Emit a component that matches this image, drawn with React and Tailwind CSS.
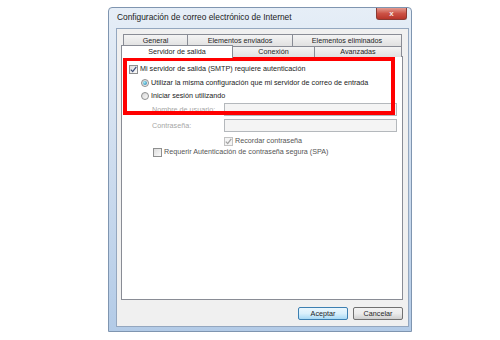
import React from 'react';

const Check = ({ color = '#3d4f7a' }) => (
    <svg width="7" height="7" viewBox="0 0 7 7" className="block">
        <path d="M0.8 3.6 L2.7 5.6 L6.3 0.9" fill="none" stroke={color} strokeWidth="1.3" />
    </svg>
);

const CheckBox = ({ checked, disabled }) => (
    <div className={`w-[9px] h-[9px] shrink-0 border flex items-center justify-center ${disabled ? 'border-[#c2c2c2] bg-[#f4f4f4]' : 'border-[#8e8f8f] bg-gradient-to-br from-[#dcdcdc] to-[#fbfbfb]'}`}>
        {checked && <Check color={disabled ? '#a3a3a3' : '#3d4f7a'} />}
    </div>
);

const Radio = ({ checked }) => (
    <div className="w-[8px] h-[8px] shrink-0 rounded-full border border-[#8e8f8f] bg-gradient-to-br from-[#d6d6d6] to-[#fafafa] flex items-center justify-center">
        {checked && <div className="w-[4px] h-[4px] rounded-full bg-[radial-gradient(circle_at_35%_35%,#9ef0f8,#1d6fa5)]" />}
    </div>
);

const Tab = ({ label, w, first }) => (
    <div
        className={`h-full border border-b-0 border-[#898c95] bg-gradient-to-b from-[#f4f4f4] to-[#e1e1e1] flex items-center justify-center text-[#1e1e1e] ${first ? '' : '-ml-px'}`}
        style={{ width: w }}
    >
        {label}
    </div>
);

export default function App() {
    return (
        <div className="w-[500px] h-[340px] bg-white overflow-hidden pt-[7px] pl-[108px] font-['Liberation_Sans',Arial,sans-serif] text-[7.2px] leading-none">
            {/* window */}
            <div className="w-[304px] h-[325px] flex flex-col border border-[#7f95b0] rounded-t-[4px] bg-gradient-to-b from-[#e6eef7] via-[#cddcee] to-[#b3cbe7]">
                {/* title bar */}
                <div className="h-[20px] shrink-0 flex items-start justify-between">
                    <div className="pl-[8px] pt-[5px] text-[8.4px] text-[#1b1b1b]">Configuración de correo electrónico de Internet</div>
                    <div className="mr-[4px] w-[31px] h-[12px] rounded-b-[3px] border border-t-0 border-[#8a3b34] bg-gradient-to-b from-[#e39a90] via-[#cc5246] to-[#b8352a] flex items-center justify-center">
                        <span className="text-[#f4e6e4] text-[8px] font-bold leading-none">x</span>
                    </div>
                </div>

                {/* content */}
                <div className="ml-[7px] mr-[2px] mb-[4px] flex-1 bg-[#f0f0f0] border border-[#94a7bf] flex flex-col pt-[5px] pl-[4px] pr-[5px] pb-[5px]">
                    {/* tabs */}
                    <div className="h-[12px] flex ml-[2px]">
                        <Tab label="General" w={65} first />
                        <Tab label="Elementos enviados" w={106} />
                        <Tab label="Elementos eliminados" w={110} />
                    </div>
                    <div className="h-[11px] flex -mb-px relative z-10">
                        <div className="w-[112px] h-[13px] -mt-px border border-b-0 border-[#898c95] bg-white flex items-start justify-center pt-[2px] text-[#1e1e1e]">
                            Servidor de salida
                        </div>
                        <Tab label="Conexión" w={83} />
                        <Tab label="Avanzadas" w={88} />
                    </div>

                    {/* panel */}
                    <div className="h-[244px] shrink-0 border border-[#898c95] bg-white relative flex flex-col text-[#222222]">
                        <div className="absolute left-[1px] top-0 w-[272px] h-[58px] border-[4px] border-[#ff0000]" />

                        <div className="h-[12px] mt-[6px] pl-[7px] flex items-center gap-[2px]">
                            <CheckBox checked />
                            <span>Mi servidor de salida (SMTP) requiere autenticación</span>
                        </div>
                        <div className="h-[12px] mt-[2px] pl-[19px] flex items-center gap-[2px]">
                            <Radio checked />
                            <span>Utilizar la misma configuración que mi servidor de correo de entrada</span>
                        </div>
                        <div className="h-[12px] mt-[1px] pl-[19px] flex items-center gap-[2px]">
                            <Radio />
                            <span>Iniciar sesión utilizando</span>
                        </div>
                        <div className="h-[13px] mt-[1px] pl-[30px] flex items-center">
                            <span className="w-[72px] text-[#a6a6a6]">Nombre de usuario:</span>
                            <div className="w-[173px] h-full border border-[#b4b8bc] bg-[#f4f4f4]" />
                        </div>
                        <div className="h-[13px] mt-[3px] pl-[30px] flex items-center">
                            <span className="w-[72px] text-[#a6a6a6]">Contraseña:</span>
                            <div className="w-[173px] h-full border border-[#b4b8bc] bg-[#f4f4f4]" />
                        </div>
                        <div className="h-[10px] mt-[4px] pl-[102px] flex items-center gap-[2px] text-[#555555]">
                            <CheckBox checked disabled />
                            <span>Recordar contraseña</span>
                        </div>
                        <div className="h-[10px] mt-[1px] pl-[31px] flex items-center gap-[2px] text-[#555555]">
                            <CheckBox />
                            <span>Requerir Autenticación de contraseña segura (SPA)</span>
                        </div>
                    </div>

                    {/* buttons */}
                    <div className="mt-[7px] h-[13px] flex justify-end gap-[5px]">
                        <div className="w-[50px] h-full rounded-[2px] border border-[#3c7fb1] bg-gradient-to-b from-[#eaf6fd] via-[#d9f0fc] to-[#a7d9f5] flex items-center justify-center text-[#1e1e1e]">
                            Aceptar
                        </div>
                        <div className="w-[50px] h-full rounded-[2px] border border-[#707070] bg-gradient-to-b from-[#f2f2f2] via-[#ebebeb] to-[#cfcfcf] flex items-center justify-center text-[#1e1e1e]">
                            Cancelar
                        </div>
                    </div>
                </div>
            </div>
        </div>
    );
}
